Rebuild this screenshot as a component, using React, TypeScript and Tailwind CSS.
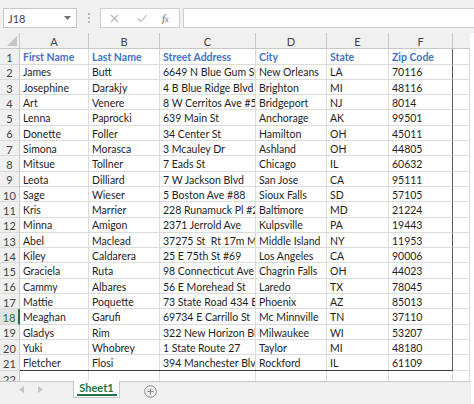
import React from "react";

const rows: string[][] = [
  ["James", "Butt", "6649 N Blue Gum St", "New Orleans", "LA", "70116"],
  ["Josephine", "Darakjy", "4 B Blue Ridge Blvd", "Brighton", "MI", "48116"],
  ["Art", "Venere", "8 W Cerritos Ave #54", "Bridgeport", "NJ", "8014"],
  ["Lenna", "Paprocki", "639 Main St", "Anchorage", "AK", "99501"],
  ["Donette", "Foller", "34 Center St", "Hamilton", "OH", "45011"],
  ["Simona", "Morasca", "3 Mcauley Dr", "Ashland", "OH", "44805"],
  ["Mitsue", "Tollner", "7 Eads St", "Chicago", "IL", "60632"],
  ["Leota", "Dilliard", "7 W Jackson Blvd", "San Jose", "CA", "95111"],
  ["Sage", "Wieser", "5 Boston Ave #88", "Sioux Falls", "SD", "57105"],
  ["Kris", "Marrier", "228 Runamuck Pl #2808", "Baltimore", "MD", "21224"],
  ["Minna", "Amigon", "2371 Jerrold Ave", "Kulpsville", "PA", "19443"],
  ["Abel", "Maclead", "37275 St\u00a0\u00a0Rt 17m M", "Middle Island", "NY", "11953"],
  ["Kiley", "Caldarera", "25 E 75th St #69", "Los Angeles", "CA", "90006"],
  ["Graciela", "Ruta", "98 Connecticut Ave Nw", "Chagrin Falls", "OH", "44023"],
  ["Cammy", "Albares", "56 E Morehead St", "Laredo", "TX", "78045"],
  ["Mattie", "Poquette", "73 State Road 434 E", "Phoenix", "AZ", "85013"],
  ["Meaghan", "Garufi", "69734 E Carrillo St", "Mc Minnville", "TN", "37110"],
  ["Gladys", "Rim", "322 New Horizon Blvd", "Milwaukee", "WI", "53207"],
  ["Yuki", "Whobrey", "1 State Route 27", "Taylor", "MI", "48180"],
  ["Fletcher", "Flosi", "394 Manchester Blvd", "Rockford", "IL", "61109"],
];

const header = ["First Name", "Last Name", "Street Address", "City", "State", "Zip Code"];
const letters = ["A", "B", "C", "D", "E", "F"];
const widths = ["w-[69px]", "w-[71px]", "w-[96px]", "w-[71px]", "w-[62px]", "w-[63px]"];

function Cell({ w, children, bold, last }: { w: string; children?: React.ReactNode; bold?: boolean; last?: boolean }) {
  return (
    <div
      className={`${w} shrink-0 h-full overflow-hidden whitespace-nowrap flex items-center pl-[3px] pt-[2px] ${
        last ? "" : "border-r border-[#dcdcdc]"
      } ${bold ? "font-bold text-[#4472c4]" : "text-[#1e1e1e]"}`}
    >
      {children}
    </div>
  );
}

function RowHead({ n, sel }: { n: number; sel?: boolean }) {
  return (
    <div
      className={`w-[20px] shrink-0 h-full flex items-center justify-center pt-[2px] text-[11px] border-r ${
        sel ? "bg-[#e2e2e2] text-[#217346] border-r-2 border-[#217346]" : "bg-[#f0f0f0] text-[#444] border-[#c8c8c8]"
      } border-b border-b-[#dadada]`}
    >
      {n}
    </div>
  );
}

function DataRow({ n, cells, bold }: { n: number; cells: string[]; bold?: boolean }) {
  const isLast = n === 21;
  return (
    <div className="flex h-[15.3px]">
      <RowHead n={n} sel={n === 18} />
      <div className={`flex h-full border-r border-[#5a5a5a] ${isLast ? "border-b border-b-[#3c3c3c]" : "border-b border-b-[#dcdcdc]"}`}>
        {cells.map((c, i) => (
          <Cell key={i} w={widths[i]} bold={bold} last={i === 5}>
            {c}
          </Cell>
        ))}
      </div>
      <div className="w-[17px] shrink-0 h-full border-r border-b border-[#dcdcdc]" />
    </div>
  );
}

export default function App() {
  return (
    <div
      className="w-[474px] h-[404px] bg-white overflow-hidden text-[10.5px] leading-none"
      style={{ fontFamily: "Lato, 'Noto Sans', sans-serif" }}
    >
      {/* formula bar */}
      <div className="h-[33px] bg-[#f1f1f1] flex items-start pt-[8px]">
        <div className="ml-[3px] w-[74px] h-[20px] bg-white border border-[#c8c8c8] flex items-center pl-[4px] pr-[5px] text-[#444] text-[11px]">
          <span className="flex-1">J18</span>
          <svg width="7" height="4" viewBox="0 0 7 4">
            <path d="M0 0 L7 0 L3.5 4 Z" fill="#707070" />
          </svg>
        </div>
        <div className="w-[23px] h-[20px] flex flex-col items-center justify-center gap-[2px]">
          <div className="w-[2px] h-[2px] bg-[#b8b8b8]" />
          <div className="w-[2px] h-[2px] bg-[#b8b8b8]" />
          <div className="w-[2px] h-[2px] bg-[#b8b8b8]" />
        </div>
        <div className="w-[80px] h-[20px] bg-white border border-[#d0d0d0] flex items-center">
          <svg className="ml-[9px]" width="9" height="9" viewBox="0 0 9 9">
            <path d="M1 1 L8 8 M8 1 L1 8" stroke="#b4b4b4" strokeWidth="1.1" />
          </svg>
          <svg className="ml-[18px]" width="11" height="9" viewBox="0 0 11 9">
            <path d="M1 4.5 L4 7.5 L10 1" stroke="#b4b4b4" strokeWidth="1.1" fill="none" />
          </svg>
          <span
            className="ml-[14px] italic text-[#6a6a6a] text-[11px]"
            style={{ fontFamily: "'Liberation Serif', serif" }}
          >
            f<span className="text-[8px]">x</span>
          </span>
        </div>
        <div className="ml-[3px] flex-1 h-[20px] bg-white border-l border-y border-[#d0d0d0]" />
      </div>

      {/* column header */}
      <div className="flex h-[16.3px] text-[#444] text-[11px]">
        <div className="w-[20px] shrink-0 h-full bg-[#f0f0f0] border-r border-b border-[#c8c8c8] relative">
          <svg className="absolute right-[2px] bottom-[2px]" width="10" height="10" viewBox="0 0 10 10">
            <path d="M10 0 L10 10 L0 10 Z" fill="#c6c6c6" />
          </svg>
        </div>
        {letters.map((l, i) => (
          <div
            key={l}
            className={`${widths[i]} ${i === 5 ? "w-[64px]" : ""} shrink-0 h-full bg-[#f0f0f0] border-r border-b border-[#c8c8c8] flex items-center justify-center pt-[1px]`}
          >
            {l}
          </div>
        ))}
        <div className="w-[17px] shrink-0 h-full bg-[#f0f0f0] border-b border-[#c8c8c8]" />
      </div>

      <DataRow n={1} cells={header} bold />
      {rows.map((r, i) => (
        <DataRow key={i} n={i + 2} cells={r} />
      ))}

      {/* row 22 partial */}
      <div className="flex h-[10.4px] overflow-hidden">
        <div className="w-[20px] shrink-0 h-full bg-[#f0f0f0] border-r border-[#c8c8c8] flex justify-center text-[#444] text-[11px] pt-[3px]">
          22
        </div>
        {widths.map((w, i) => (
          <div key={i} className={`${w} ${i === 5 ? "w-[64px]" : ""} shrink-0 h-full border-r border-[#dcdcdc]`} />
        ))}
        <div className="w-[17px] shrink-0 h-full border-r border-[#dcdcdc]" />
      </div>

      {/* tabs */}
      <div className="h-[23px] w-[471px] bg-[#f0f0f0] border-t border-[#c8c8c8] flex items-start">
        <div className="w-[73px] h-[16px] flex items-center">
          <svg className="ml-[19px]" width="5" height="7" viewBox="0 0 5 7">
            <path d="M5 0 L0 3.5 L5 7 Z" fill="#c4c4c4" />
          </svg>
          <svg className="ml-[14px]" width="5" height="7" viewBox="0 0 5 7">
            <path d="M0 0 L5 3.5 L0 7 Z" fill="#c4c4c4" />
          </svg>
        </div>
        <div className="w-[47px] h-[17px] -mt-[1px] bg-white border-x border-b border-[#c8c8c8] flex flex-col items-center">
          <div className="flex-1 flex items-center pt-[1px] font-bold text-[#217346] text-[11px]">Sheet1</div>
          <div className="w-[40px] h-[2px] bg-[#217346] mb-[1px]" />
        </div>
        <div className="ml-[24px] mt-[3px]">
          <svg width="13" height="13" viewBox="0 0 13 13">
            <circle cx="6.5" cy="6.5" r="5.8" stroke="#8a8a8a" strokeWidth="1" fill="none" />
            <path d="M6.5 3.5 V9.5 M3.5 6.5 H9.5" stroke="#8a8a8a" strokeWidth="1.2" />
          </svg>
        </div>
      </div>
    </div>
  );
}
